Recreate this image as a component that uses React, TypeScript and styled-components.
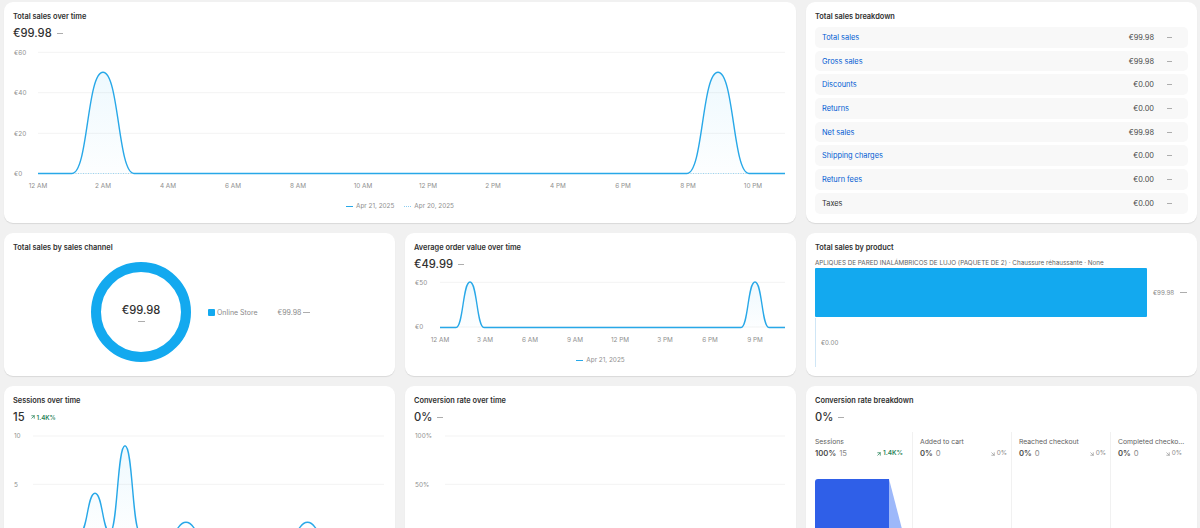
import React from "react";
import styled, { createGlobalStyle } from "styled-components";
import { ArrowUpRight, ArrowDownRight } from "lucide-react";

const GlobalStyle = createGlobalStyle`
  html, body {
    margin: 0;
    height: 528px;
    overflow: hidden;
    background: #f1f1f1;
    font-family: Inter, "Liberation Sans", sans-serif;
    color: #303030;
  }
`;

const Page = styled.div`
  display: grid;
  grid-template-columns: repeat(3, 391px);
  grid-template-rows: 221px 143px 220px;
  gap: 10px;
  padding: 2px 3px 0 4px;
  height: 526px;
  overflow: hidden;
`;

const Card = styled.section<{ $span?: number }>`
  grid-column: span ${(p) => p.$span ?? 1};
  background: #fff;
  border-radius: 9px;
  padding: 9px;
  box-shadow: 0 1px 1px rgba(0, 0, 0, 0.1);
  display: flex;
  flex-direction: column;
  min-width: 0;
`;

const Title = styled.h2`
  margin: 0;
  font-size: 7.4px;
  line-height: 11px;
  font-weight: 600;
  color: #303030;
`;

const Summary = styled.div`
  display: flex;
  align-items: center;
  gap: 5px;
  height: 18px;
  margin-top: 2px;
`;

const BigValue = styled.span`
  font-size: 11.2px;
  font-weight: 500;
  color: #303030;
`;

const Dash = styled.span<{ $w?: number }>`
  display: inline-block;
  flex: none;
  width: ${(p) => p.$w ?? 6}px;
  height: 1px;
  background: #adadad;
`;

const Growth = styled.span`
  display: inline-flex;
  align-items: center;
  gap: 1px;
  font-size: 6.2px;
  font-weight: 600;
  color: #29845a;
`;

const ChartSvg = styled.svg`
  display: block;
  flex: none;
  margin-top: 2px;
  overflow: visible;
  text {
    font-family: Inter, "Liberation Sans", sans-serif;
    font-size: 6.4px;
    fill: #8f8f8f;
  }
`;

const Legend = styled.div`
  display: flex;
  justify-content: center;
  gap: 10px;
  font-size: 6.4px;
  line-height: 8px;
  color: #8f8f8f;
`;

const LegendItem = styled.span`
  display: inline-flex;
  align-items: center;
  gap: 3px;
`;

const LegendLine = styled.span<{ $dotted?: boolean }>`
  width: 7px;
  height: 0;
  border-top: 1px ${(p) => (p.$dotted ? "dotted #8ccdf0" : "solid #28a8e8")};
`;

/* breakdown table */
const RowList = styled.div`
  display: flex;
  flex-direction: column;
  gap: 3px;
  margin-top: 5px;
`;

const Row = styled.div`
  display: flex;
  align-items: center;
  height: 20.7px;
  padding: 0 16px 0 7px;
  background: #f8f8f8;
  border-radius: 5px;
  font-size: 7.4px;
  color: #616161;
`;

const RowLabel = styled.span<{ $link?: boolean }>`
  flex: 1;
  color: ${(p) => (p.$link ? "#005bd3" : "#303030")};
`;

const RowValue = styled.span`
  margin-right: 13px;
  color: #4a4a4a;
`;

/* donut */
const DonutBody = styled.div`
  flex: 1;
  display: flex;
  align-items: center;
  padding-left: 78px;
  margin-top: 4px;
`;

const DonutWrap = styled.div`
  position: relative;
  width: 100px;
  height: 100px;
  flex: none;
`;

const DonutCenter = styled.div`
  position: absolute;
  inset: 0;
  display: flex;
  flex-direction: column;
  align-items: center;
  justify-content: center;
  gap: 4px;
  font-size: 11.2px;
  font-weight: 500;
  color: #303030;
`;

const ChannelLegend = styled.div`
  display: flex;
  align-items: center;
  margin-left: 17px;
  font-size: 7px;
  color: #8a8a8a;
`;

const Swatch = styled.span`
  width: 7px;
  height: 7px;
  border-radius: 1px;
  background: #13a9ef;
  margin-right: 2px;
`;

const ChannelValue = styled.span`
  margin-left: 20px;
  margin-right: 2px;
`;

/* product bars */
const ProductName = styled.div`
  margin-top: 6px;
  font-size: 6.3px;
  line-height: 9px;
  color: #616161;
  white-space: nowrap;
`;

const BarRow = styled.div`
  display: flex;
  align-items: center;
  height: 49px;
  font-size: 6.2px;
  color: #8a8a8a;
  & + & {
    margin-top: 1px;
  }
`;

const Bar = styled.div`
  width: 332px;
  height: 49px;
  flex: none;
  background: #13a9ef;
  border-radius: 1px;
  margin-right: 6px;
`;

const BarDash = styled(Dash)`
  margin-left: 6px;
`;

const ZeroBar = styled.div`
  width: 1px;
  height: 49px;
  background: #cfe6f6;
  margin-right: 5px;
`;

/* funnel */
const Funnel = styled.div`
  display: grid;
  grid-template-columns: 98px 99px 99px 75px;
  margin-top: 6px;
  flex: 1;
`;

const Step = styled.div<{ $first?: boolean }>`
  padding: 5px ${(p) => (p.$first ? 9 : 4)}px 0 ${(p) => (p.$first ? 0 : 7)}px;
  border-right: 1px solid #f1f1f1;
  min-width: 0;
  &:last-child {
    border-right: 0;
  }
`;

const StepLabel = styled.div`
  font-size: 6.8px;
  line-height: 10px;
  color: #616161;
  white-space: nowrap;
`;

const StepMetrics = styled.div`
  display: flex;
  align-items: center;
  margin-top: 1px;
  font-size: 7.7px;
  line-height: 11px;
  color: #8a8a8a;
`;

const StepPercent = styled.strong`
  font-weight: 600;
  color: #4a4a4a;
  margin-right: 3px;
`;

const StepChange = styled.span<{ $up?: boolean }>`
  margin-left: auto;
  display: inline-flex;
  align-items: center;
  gap: 1px;
  font-size: 6.4px;
  font-weight: ${(p) => (p.$up ? 600 : 400)};
  color: ${(p) => (p.$up ? "#29845a" : "#8a8a8a")};
`;

const FunnelBar = styled.svg`
  display: block;
  margin-top: 20px;
`;

const BLUE = "#28a8e8";

// one bump of the line, from the baseline up to the peak and back
const bump = (cx: number, half: number, top: number, base: number) =>
  `L${cx - half} ${base} C${cx - half * 0.48} ${base} ${cx - half * 0.52} ${top} ${cx} ${top} ` +
  `C${cx + half * 0.52} ${top} ${cx + half * 0.48} ${base} ${cx + half} ${base} `;

type Peak = [number, number, number];

const linePath = (x0: number, x1: number, base: number, peaks: Peak[]) =>
  `M${x0} ${base} ` + peaks.map(([c, h, t]) => bump(c, h, t, base)).join("") + `L${x1} ${base}`;

type ChartProps = {
  w: number;
  h: number;
  left: number;
  right: number;
  yTicks: [string, number][];
  xTicks?: [string, number][];
  xY?: number;
  base?: number;
  peaks?: Peak[];
  dotted?: boolean;
  id: string;
};

function LineChart({ w, h, left, right, yTicks, xTicks = [], xY = 0, base = 0, peaks, dotted, id }: ChartProps) {
  return (
    <ChartSvg width={w} height={h} viewBox={`0 0 ${w} ${h}`}>
      <defs>
        <linearGradient id={id} x1="0" y1="0" x2="0" y2="1">
          <stop offset="0" stopColor="#13a9ef" stopOpacity="0.07" />
          <stop offset="1" stopColor="#13a9ef" stopOpacity="0.01" />
        </linearGradient>
      </defs>
      {yTicks.map(([label, y]) => (
        <g key={label}>
          <text x={1} y={y + 2.3}>{label}</text>
          <line x1={left} x2={right} y1={y} y2={y} stroke="#f3f3f3" strokeWidth="1" />
        </g>
      ))}
      {xTicks.map(([label, x]) => (
        <text key={label} x={x} y={xY} textAnchor="middle">{label}</text>
      ))}
      {dotted && <line x1={left} x2={right} y1={base} y2={base} stroke="#9bd5f3" strokeWidth="1" strokeDasharray="1 1.5" />}
      {peaks && (
        <>
          <path d={linePath(left, right, base, peaks) + ` L${right} ${base} L${left} ${base} Z`} fill={`url(#${id})`} />
          <path d={linePath(left, right, base, peaks)} fill="none" stroke={BLUE} strokeWidth="1.4" />
        </>
      )}
    </ChartSvg>
  );
}

const breakdown: [string, string, boolean][] = [
  ["Total sales", "€99.98", true],
  ["Gross sales", "€99.98", true],
  ["Discounts", "€0.00", true],
  ["Returns", "€0.00", true],
  ["Net sales", "€99.98", true],
  ["Shipping charges", "€0.00", true],
  ["Return fees", "€0.00", true],
  ["Taxes", "€0.00", false],
];

const hours = ["12 AM", "2 AM", "4 AM", "6 AM", "8 AM", "10 AM", "12 PM", "2 PM", "4 PM", "6 PM", "8 PM", "10 PM"];
const aovHours = ["12 AM", "3 AM", "6 AM", "9 AM", "12 PM", "3 PM", "6 PM", "9 PM"];

const steps = [
  { label: "Added to cart" },
  { label: "Reached checkout" },
  { label: "Completed checko..." },
];

export default function App() {
  return (
    <>
      <GlobalStyle />
      <Page>
        <Card $span={2}>
          <Title>Total sales over time</Title>
          <Summary>
            <BigValue>€99.98</BigValue>
            <Dash />
          </Summary>
          <LineChart
            id="sales"
            w={774}
            h={158}
            left={25}
            right={772}
            yTicks={[["€60", 8.3], ["€40", 48.7], ["€20", 89.3], ["€0", 129.5]]}
            xTicks={hours.map((h, i) => [h, 25 + i * 65] as [string, number])}
            xY={144.3}
            base={129.5}
            dotted
            peaks={[[90, 31, 28.3], [705, 31, 28.3]]}
          />
          <Legend>
            <LegendItem><LegendLine />Apr 21, 2025</LegendItem>
            <LegendItem><LegendLine $dotted />Apr 20, 2025</LegendItem>
          </Legend>
        </Card>

        <Card>
          <Title>Total sales breakdown</Title>
          <RowList>
            {breakdown.map(([label, value, link]) => (
              <Row key={label}>
                <RowLabel $link={link}>{label}</RowLabel>
                <RowValue>{value}</RowValue>
                <Dash $w={5} />
              </Row>
            ))}
          </RowList>
        </Card>

        <Card>
          <Title>Total sales by sales channel</Title>
          <DonutBody>
            <DonutWrap>
              <svg width="100" height="100" viewBox="0 0 100 100">
                <circle cx="50" cy="50" r="45" fill="none" stroke="#13a9ef" strokeWidth="10" />
              </svg>
              <DonutCenter>
                €99.98
                <Dash $w={7} />
              </DonutCenter>
            </DonutWrap>
            <ChannelLegend>
              <Swatch />
              Online Store
              <ChannelValue>€99.98</ChannelValue>
              <Dash $w={7} />
            </ChannelLegend>
          </DonutBody>
        </Card>

        <Card>
          <Title>Average order value over time</Title>
          <Summary>
            <BigValue>€49.99</BigValue>
            <Dash />
          </Summary>
          <LineChart
            id="aov"
            w={373}
            h={81}
            left={26}
            right={371}
            yTicks={[["€50", 7.3], ["€0", 52]]}
            xTicks={aovHours.map((h, i) => [h, 26 + i * 45] as [string, number])}
            xY={67}
            base={52.5}
            peaks={[[56, 14, 7], [341, 14, 7]]}
          />
          <Legend>
            <LegendItem><LegendLine />Apr 21, 2025</LegendItem>
          </Legend>
        </Card>

        <Card>
          <Title>Total sales by product</Title>
          <ProductName>APLIQUES DE PARED INALÁMBRICOS DE LUJO (PAQUETE DE 2) · Chaussure réhaussante · None</ProductName>
          <BarRow>
            <Bar />
            €99.98
            <BarDash $w={7} />
          </BarRow>
          <BarRow>
            <ZeroBar />
            €0.00
          </BarRow>
        </Card>

        <Card>
          <Title>Sessions over time</Title>
          <Summary>
            <BigValue>15</BigValue>
            <Growth><ArrowUpRight size={6} strokeWidth={3} />1.4K%</Growth>
          </Summary>
          <LineChart
            id="sessions"
            w={373}
            h={120}
            left={20}
            right={371}
            yTicks={[["10", 8], ["5", 56.3]]}
            base={104.6}
            peaks={[[82, 15.2, 65.3], [112, 15.2, 17.7], [173, 15.2, 94.3], [294.5, 15.2, 94.3]]}
          />
        </Card>

        <Card>
          <Title>Conversion rate over time</Title>
          <Summary>
            <BigValue>0%</BigValue>
            <Dash />
          </Summary>
          <LineChart
            id="conversion"
            w={373}
            h={120}
            left={31}
            right={371}
            yTicks={[["100%", 8], ["50%", 56.3]]}
          />
        </Card>

        <Card>
          <Title>Conversion rate breakdown</Title>
          <Summary>
            <BigValue>0%</BigValue>
            <Dash />
          </Summary>
          <Funnel>
            <Step $first>
              <StepLabel>Sessions</StepLabel>
              <StepMetrics>
                <StepPercent>100%</StepPercent>15
                <StepChange $up><ArrowUpRight size={6} strokeWidth={3} />1.4K%</StepChange>
              </StepMetrics>
              <FunnelBar width="88" height="70" viewBox="0 0 88 70">
                <polygon points="74,0 87,50 87,70 74,70" fill="#9db8fa" />
                <path d="M3 0 H74 V70 H0 V3 A3 3 0 0 1 3 0 Z" fill="#2f5fe8" />
              </FunnelBar>
            </Step>
            {steps.map((s) => (
              <Step key={s.label}>
                <StepLabel>{s.label}</StepLabel>
                <StepMetrics>
                  <StepPercent>0%</StepPercent>0
                  <StepChange><ArrowDownRight size={6} strokeWidth={2.5} />0%</StepChange>
                </StepMetrics>
              </Step>
            ))}
          </Funnel>
        </Card>
      </Page>
    </>
  );
}
